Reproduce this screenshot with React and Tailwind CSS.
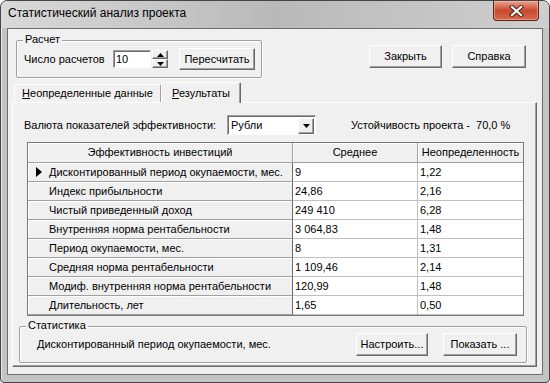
import React from "react";

const rows = [
  ["Дисконтированный период окупаемости, мес.", "9", "1,22"],
  ["Индекс прибыльности", "24,86", "2,16"],
  ["Чистый приведенный доход", "249 410", "6,28"],
  ["Внутренняя норма рентабельности", "3 064,83", "1,48"],
  ["Период окупаемости, мес.", "8", "1,31"],
  ["Средняя норма рентабельности", "1 109,46", "2,14"],
  ["Модиф. внутренняя норма рентабельности", "120,99", "1,48"],
  ["Длительность, лет", "1,65", "0,50"],
];

const Btn = ({ children, className = "" }) => (
  <div
    className={
      "flex items-center justify-center bg-[#f0f0f0] border border-t-white border-l-white border-r-[#696969] border-b-[#696969] shadow-[inset_-1px_-1px_0_#a0a0a0] " +
      className
    }
  >
    {children}
  </div>
);

const Group = ({ title, className = "", children }) => (
  <div
    className={
      "relative rounded-[2px] border border-[#a0a0a0] shadow-[1px_1px_0_white,inset_1px_1px_0_white] " +
      className
    }
  >
    {/* caption sits over the frame line */}
    <span className="absolute -top-[8px] left-[6px] bg-[#f0f0f0] px-[2px] leading-[13px]">
      {title}
    </span>
    {children}
  </div>
);

const Triangle = ({ dir }) => (
  <svg width="7" height="4" viewBox="0 0 7 4">
    {dir === "up" ? (
      <polygon points="0,4 7,4 3.5,0" fill="black" />
    ) : (
      <polygon points="0,0 7,0 3.5,4" fill="black" />
    )}
  </svg>
);

export default function App() {
  return (
    <div className="w-[550px] h-[383px] flex flex-col rounded-t-[7px] rounded-b-[4px] border border-[#454545] bg-[#c4c4c4] shadow-[inset_1px_1px_0_#e6e6e6] font-['Liberation_Sans',sans-serif] text-[11px] leading-[13px] text-black overflow-hidden">
      {/* title bar */}
      <div className="flex h-[27px] shrink-0 items-start bg-gradient-to-r from-[#d9d9d9] via-[#b9b9b9] to-[#cfcfcf] rounded-t-[6px]">
        <div className="pl-[7px] pt-[5px] text-[12px] leading-[15px] text-black">
          Статистический анализ проекта
        </div>
        <div className="ml-auto mr-[10px] flex h-[20px] w-[46px] items-center justify-center rounded-b-[4px] border border-t-0 border-[#5a2418] bg-gradient-to-b from-[#e9a392] via-[#c9472d] to-[#d86a4c] shadow-[inset_0_0_0_1px_rgba(255,200,180,0.5)]">
          <svg width="15" height="12" viewBox="0 0 15 12">
            <path d="M3 2 L12 10 M12 2 L3 10" stroke="#4a2a22" strokeWidth="4.2" strokeLinecap="square" />
            <path d="M3 2 L12 10 M12 2 L3 10" stroke="white" strokeWidth="2.2" strokeLinecap="square" />
          </svg>
        </div>
      </div>

      {/* client area */}
      <div className="ml-[6px] mr-[6px] mb-[7px] flex-1 flex flex-col border border-[#6e6e6e] bg-[#f0f0f0]">
        <div className="flex items-start pt-[11px]">
          <Group title="Расчет" className="ml-[8px] w-[246px] h-[38px] flex items-center pl-[7px]">
            <span className="w-[89px]">Число расчетов</span>
            <div className="w-[38px] h-[18px] bg-white flex items-center pl-[2px] border border-t-[#a0a0a0] border-l-[#a0a0a0] border-r-white border-b-white shadow-[inset_1px_1px_0_#696969]">
              10
            </div>
            <div className="ml-[1px] flex flex-col w-[16px] h-[18px]">
              <Btn className="h-[9px]">
                <Triangle dir="up" />
              </Btn>
              <Btn className="h-[9px]">
                <Triangle dir="down" />
              </Btn>
            </div>
            <Btn className="ml-[11px] w-[76px] h-[22px]">Пересчитать</Btn>
          </Group>
          <div className="ml-auto mr-[16px] mt-[5px] flex gap-[10px]">
            <Btn className="w-[73px] h-[23px]">Закрыть</Btn>
            <Btn className="w-[74px] h-[23px]">Справка</Btn>
          </div>
        </div>

        {/* tabs */}
        <div className="mt-[4px] ml-[6px] flex items-end h-[20px]">
          <div className="w-[147px] h-[18px] flex items-center justify-center rounded-t-[2px] border border-b-0 border-t-white border-l-white border-r-[#a0a0a0]">
            <span>
              <u>Н</u>еопределенные данные
            </span>
          </div>
          <div className="relative z-10 -mb-[1px] w-[80px] h-[21px] flex items-center justify-center rounded-t-[2px] bg-[#f0f0f0] border border-b-0 border-t-white border-l-white border-r-[#696969] shadow-[inset_-1px_0_0_#a0a0a0]">
            <span>
              <u>Р</u>езультаты
            </span>
          </div>
        </div>

        {/* tab panel */}
        <div className="ml-[4px] w-[525px] h-[265px] flex flex-col border border-t-white border-l-white border-r-[#696969] border-b-[#696969] shadow-[inset_-1px_-1px_0_#a0a0a0]">
          <div className="mt-[12px] ml-[11px] flex items-center h-[20px]">
            <span className="w-[203px]">Валюта показателей эффективности:</span>
            <div className="w-[89px] h-[20px] flex items-center bg-white border border-t-[#a0a0a0] border-l-[#a0a0a0] border-r-white border-b-white shadow-[inset_1px_1px_0_#696969]">
              <span className="flex-1 pl-[3px]">Рубли</span>
              <Btn className="w-[16px] h-[16px] mr-[1px] mt-[1px]">
                <Triangle dir="down" />
              </Btn>
            </div>
            <span className="ml-[35px] whitespace-pre">Устойчивость проекта -  70,0 %</span>
          </div>

          {/* grid */}
          <div className="mt-[7px] ml-[14px] w-[497px] h-[174px] border border-[#7a7a7a] shadow-[inset_1px_1px_0_#a0a0a0] bg-[#f0f0f0] flex flex-col">
            <div className="flex h-[20px]">
              <div className="w-[265px] flex items-center justify-center border-r border-b border-[#a0a0a0] shadow-[inset_1px_1px_0_white]">
                Эффективность инвестиций
              </div>
              <div className="w-[125px] flex items-center justify-center border-r border-b border-[#a0a0a0] shadow-[inset_1px_1px_0_white]">
                Среднее
              </div>
              <div className="w-[105px] flex items-center justify-center border-b border-[#a0a0a0] shadow-[inset_1px_1px_0_white]">
                Неопределенность
              </div>
            </div>
            {rows.map((r, i) => (
              <div key={i} className="flex h-[19px]">
                <div className="w-[265px] relative flex items-center pl-[21px] border-r border-b border-r-[#696969] border-b-[#a0a0a0] shadow-[inset_1px_1px_0_white]">
                  {i === 0 && (
                    <svg className="absolute left-[8px] top-[4px]" width="7" height="10" viewBox="0 0 7 10">
                      <polygon points="0,0 6,5 0,10" fill="black" />
                    </svg>
                  )}
                  {r[0]}
                </div>
                <div className="w-[125px] bg-white flex items-center pl-[2px] border-r border-b border-[#c0c0c0]">
                  {r[1]}
                </div>
                <div className="w-[105px] bg-white flex items-center pl-[2px] border-b border-[#c0c0c0]">
                  {r[2]}
                </div>
              </div>
            ))}
          </div>

          <Group title="Статистика" className="mt-[10px] ml-[6px] w-[508px] h-[37px] flex items-center pl-[17px]">
            <span className="flex-1">Дисконтированный период окупаемости, мес.</span>
            <Btn className="w-[72px] h-[23px]">Настроить...</Btn>
            <Btn className="ml-[15px] mr-[9px] w-[74px] h-[23px]">Показать ...</Btn>
          </Group>
        </div>
      </div>
    </div>
  );
}
